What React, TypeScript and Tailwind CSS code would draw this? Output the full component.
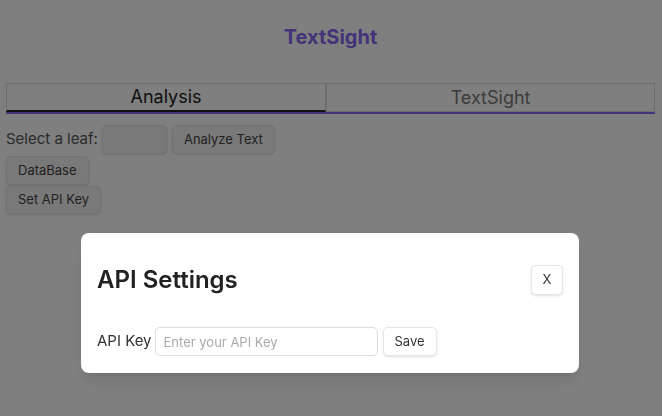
import { useState } from 'react';

export default function App() {
  const [tab, setTab] = useState<'analysis' | 'textsight'>('analysis');
  const [apiKey, setApiKey] = useState('');

  return (
    <div className="relative min-h-screen bg-white pl-[6px] pr-[7px] font-['Inter',sans-serif] text-[#555]">
      {/* Header */}
      <h1 className="pt-[23px] mb-[32px] h-[51px] leading-[28px] text-center text-[20px] font-bold text-[#8b66f5]">
        TextSight
      </h1>

      {/* Tabs */}
      <div className="flex border-b-2 border-[#8b66f5]">
        <button
          onClick={() => setTab('analysis')}
          className={`flex-auto h-[29px] border border-[#ddd] text-[18px] leading-none ${
            tab === 'analysis' ? 'border-b-2 border-b-[#222] text-[#222]' : 'text-[#777]'
          }`}
        >
          Analysis
        </button>
        <button
          onClick={() => setTab('textsight')}
          className={`flex-auto h-[29px] border border-[#ddd] text-[18px] leading-none ${
            tab === 'textsight' ? 'border-b-2 border-b-[#222] text-[#222]' : 'text-[#777]'
          }`}
        >
          TextSight
        </button>
      </div>

      {/* Controls */}
      <div className="mt-[11px] flex items-center text-[15px]">
        <span>Select a leaf:</span>
        <input className="ml-[4px] h-[29px] w-[65px] rounded-[5px] border border-[#e6e6e6] bg-[#f2f2f2] shadow-sm" />
        <button className="ml-[5px] h-[29px] px-[11px] rounded-[5px] border border-[#e6e6e6] bg-[#f2f2f2] text-[13px] text-[#444] shadow-sm">
          Analyze Text
        </button>
      </div>
      <div className="mt-[2px]">
        <button className="h-[29px] px-[11px] rounded-[5px] border border-[#e6e6e6] bg-[#f2f2f2] text-[13px] text-[#444] shadow-sm">
          DataBase
        </button>
      </div>
      <div className="mt-[1px]">
        <button className="h-[28px] px-[11px] rounded-[5px] border border-[#e6e6e6] bg-[#f2f2f2] text-[13px] text-[#444] shadow-sm">
          Set API Key
        </button>
      </div>

      {/* Modal */}
      <div className="fixed inset-0 flex justify-start bg-black/50 pl-[81px] pt-[233px]">
        <div className="h-[140px] w-[498px] rounded-lg bg-white px-4 shadow-lg">
          <div className="mt-[32px] flex h-[30px] items-center justify-between">
            <h2 className="text-[24px] font-semibold text-[#222]">API Settings</h2>
            <button className="h-[30px] w-[32px] rounded-[5px] border border-[#e6e6e6] bg-white text-[13px] text-[#333] shadow-sm">
              X
            </button>
          </div>
          <div className="mt-[32px] flex items-center text-[15px] text-[#333]">
            <label className="mr-[3px]">API Key</label>
            <input
              value={apiKey}
              onChange={(e) => setApiKey(e.target.value)}
              placeholder="Enter your API Key"
              className="h-[29px] w-[223px] rounded-[5px] border border-[#ddd] px-[8px] text-[13px] placeholder:text-[#aaa] outline-none"
            />
            <button className="ml-[5px] h-[29px] w-[54px] rounded-[5px] border border-[#e6e6e6] bg-white text-[13px] text-[#333] shadow-sm">
              Save
            </button>
          </div>
        </div>
      </div>
    </div>
  );
}
